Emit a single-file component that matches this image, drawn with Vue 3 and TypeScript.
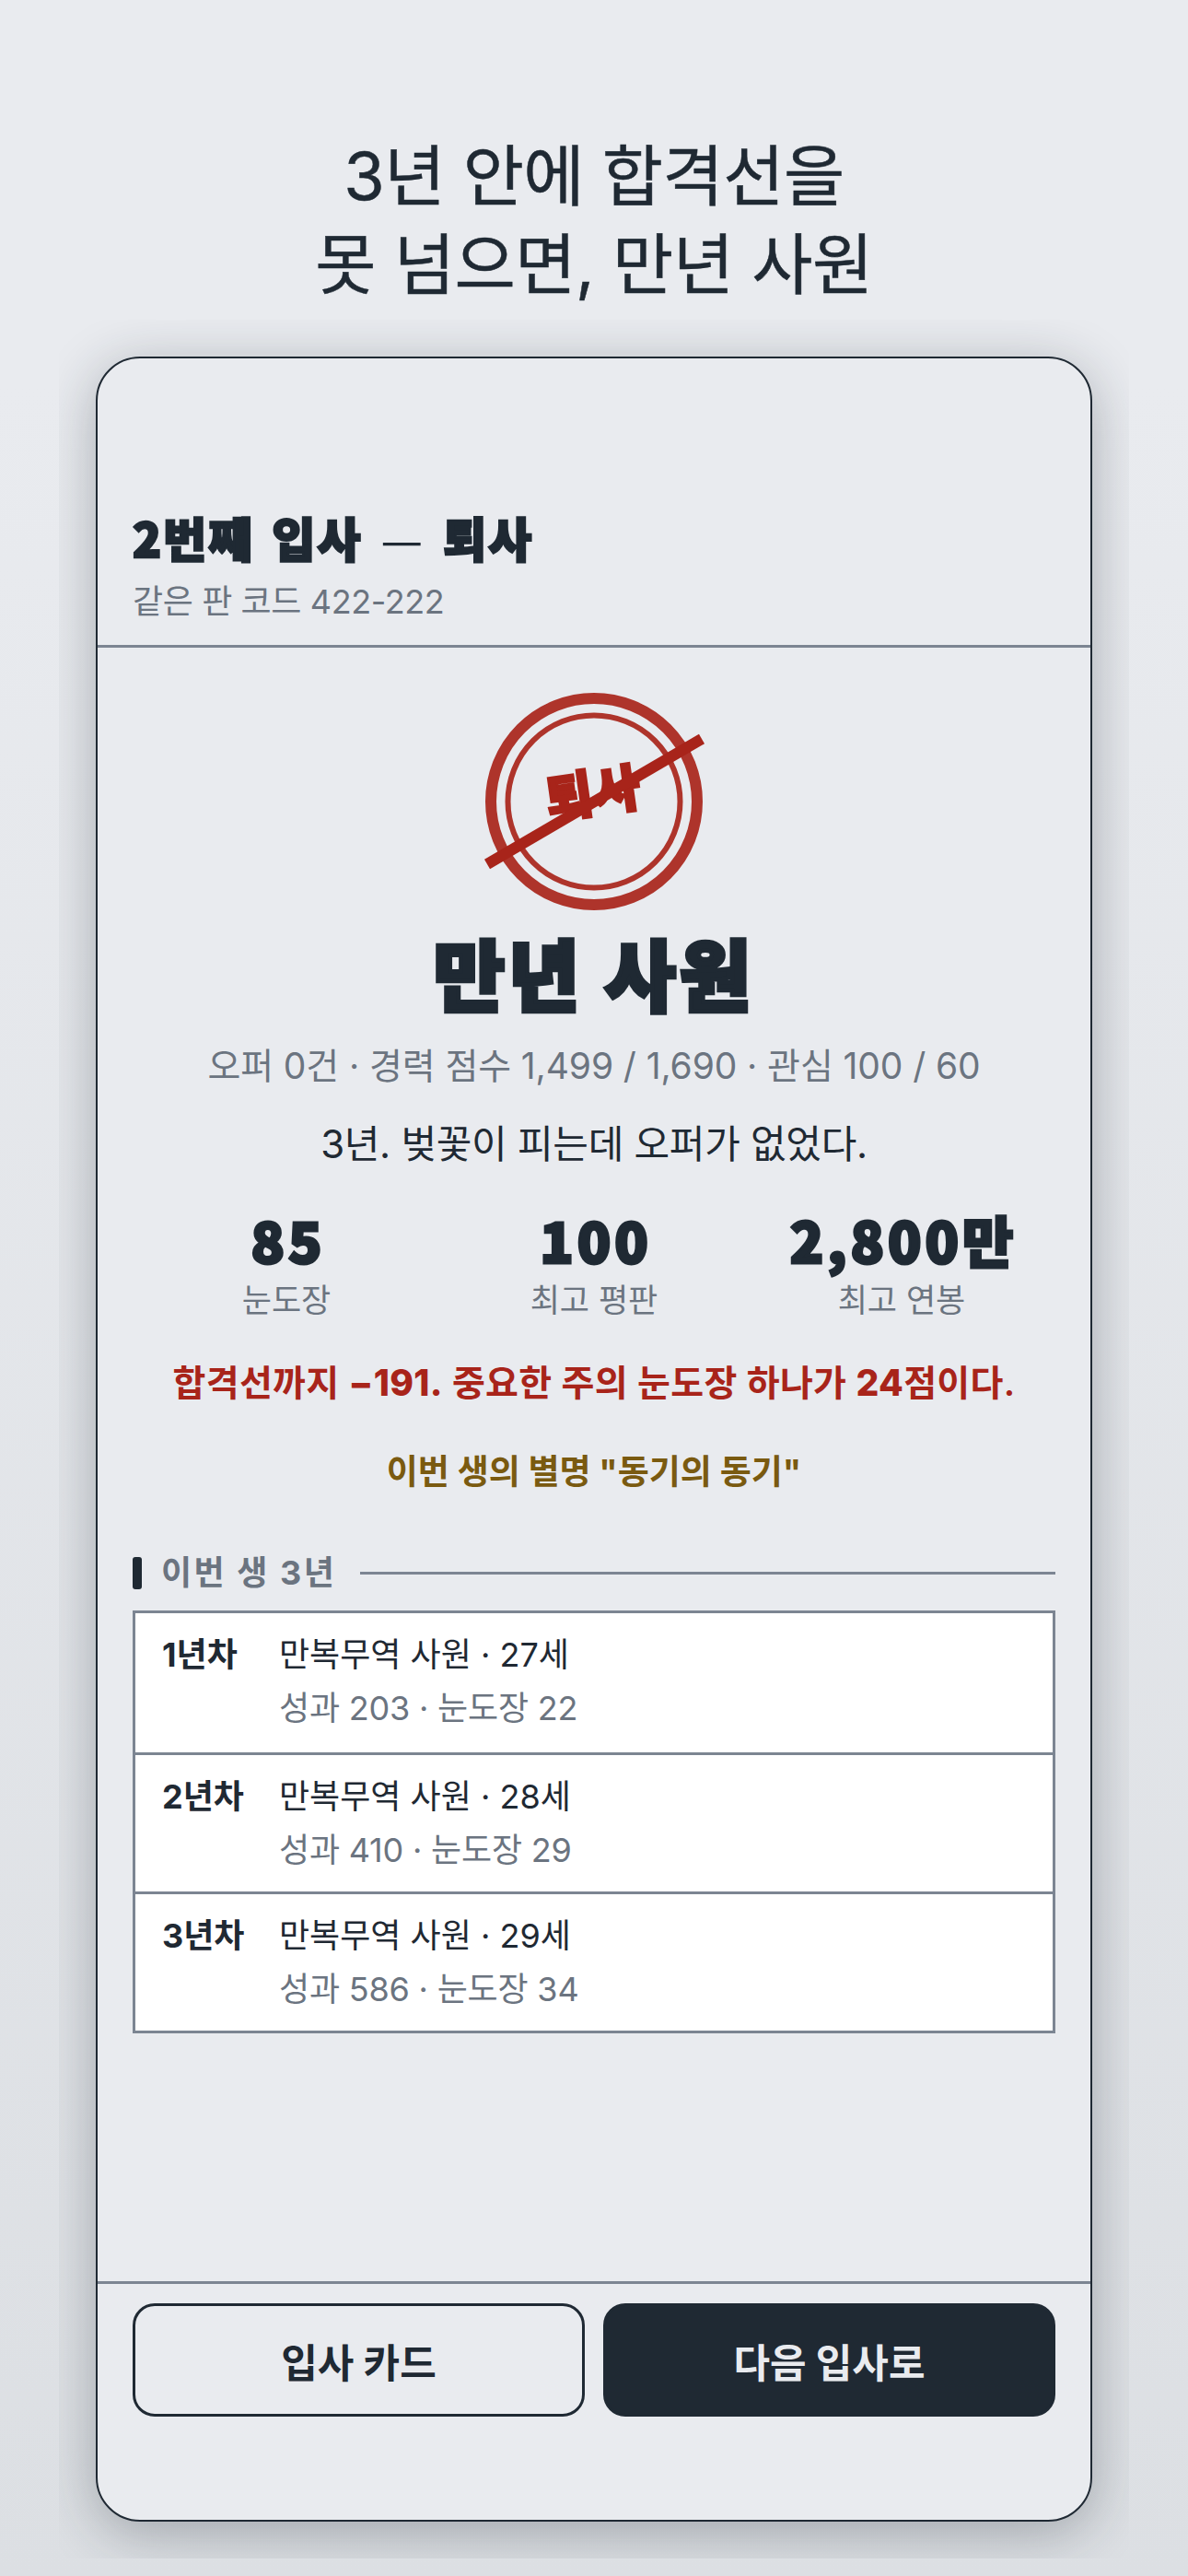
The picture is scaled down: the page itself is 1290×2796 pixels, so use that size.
<script setup lang="ts">
interface Stat {
  value: string;
  label: string;
}

interface YearRow {
  year: string;
  job: string;
  detail: string;
}

const stats: Stat[] = [
  { value: '85', label: '눈도장' },
  { value: '100', label: '최고 평판' },
  { value: '2,800만', label: '최고 연봉' },
];

const years: YearRow[] = [
  { year: '1년차', job: '만복무역 사원 · 27세', detail: '성과 203 · 눈도장 22' },
  { year: '2년차', job: '만복무역 사원 · 28세', detail: '성과 410 · 눈도장 29' },
  { year: '3년차', job: '만복무역 사원 · 29세', detail: '성과 586 · 눈도장 34' },
];
</script>

<template>
  <div class="page">
    <h1 class="headline">3년 안에 합격선을<br />못 넘으면, 만년 사원</h1>

    <div class="phone-clip">
      <div class="phone">
        <header class="top">
          <h2 class="top-title">2번째 입사 <span class="dash">—</span> 퇴사</h2>
          <p class="top-sub">같은 판 코드 422-222</p>
        </header>

        <main class="body">
          <div class="stamp">
            <svg width="250" height="250" viewBox="0 0 250 250">
              <circle cx="125" cy="125" r="112" class="ring" stroke-width="12" />
              <circle cx="125" cy="125" r="93.5" class="ring" stroke-width="6" />
              <text x="125" y="136" class="stamp-text" text-anchor="middle" transform="rotate(-8 125 125)">퇴사</text>
              <line x1="9" y1="193" x2="242" y2="57" class="slash" stroke-width="12" />
            </svg>
          </div>

          <div class="rank">만년 사원</div>
          <p class="summary">오퍼 0건 · 경력 점수 1,499 / 1,690 · 관심 100 / 60</p>
          <p class="quote">3년. 벚꽃이 피는데 오퍼가 없었다.</p>

          <div class="stats">
            <div v-for="stat in stats" :key="stat.label" class="stat">
              <div class="stat-value">{{ stat.value }}</div>
              <div class="stat-label">{{ stat.label }}</div>
            </div>
          </div>

          <p class="warn">합격선까지 <b>−191.</b> 중요한 주의 눈도장 하나가 <b>24</b>점이다.</p>
          <p class="nick">이번 생의 별명 "동기의 동기"</p>

          <div class="section-head">
            <span class="section-bar"></span>
            <span class="section-name">이번 생 3년</span>
            <span class="section-line"></span>
          </div>

          <ul class="years">
            <li v-for="row in years" :key="row.year" class="year-row">
              <span class="year">{{ row.year }}</span>
              <div>
                <div class="job">{{ row.job }}</div>
                <div class="detail">{{ row.detail }}</div>
              </div>
            </li>
          </ul>
        </main>

        <footer class="actions">
          <button class="btn ghost">입사 카드</button>
          <button class="btn solid">다음 입사로</button>
        </footer>
      </div>
    </div>
  </div>
</template>

<style>
html,
body {
  margin: 0;
  background: #e9ebef;
}
</style>

<style scoped>
.page {
  width: 1290px;
  height: 2796px;
  box-sizing: border-box;
  padding-top: 143px;
  overflow: hidden;
  background: linear-gradient(180deg, #e9ebef 0%, #e9ebef 15%, #dcdfe3 100%);
  font-family: Inter, "Noto Sans CJK KR", sans-serif;
  color: #1f2933;
}

.headline {
  margin: 0;
  text-align: center;
  font-size: 72px;
  line-height: 96px;
  font-weight: 400;
  letter-spacing: -0.5px;
  -webkit-text-stroke: 0.5px #1f2933;
}

/* the shadow stops dead 40px outside the card in the reference */
.phone-clip {
  width: 1162px;
  margin: 12px auto 0;
  padding: 40px;
  box-sizing: border-box;
  overflow: hidden;
}

.phone {
  height: 2350px;
  box-sizing: border-box;
  display: flex;
  flex-direction: column;
  background: #e9ebef;
  border: 2px solid #1f2933;
  border-radius: 48px;
  box-shadow: 0 12px 60px rgba(31, 41, 51, 0.32);
}

.top {
  height: 314px;
  box-sizing: border-box;
  padding: 161px 38px 0;
  border-bottom: 3px solid #7c8592;
}

.top-title {
  margin: 0;
  font-family: "Noto Sans CJK KR", sans-serif;
  font-size: 51px;
  line-height: 66px;
  font-weight: 900;
  -webkit-text-stroke: 2.5px #1f2933;
  letter-spacing: 2.2px;
  word-spacing: 6px;
}

.dash {
  font-weight: 400;
  -webkit-text-stroke: 0;
}

.top-sub {
  margin: 10px 0 0;
  font-size: 36px;
  line-height: 54px;
  letter-spacing: -0.4px;
  color: #6b7480;
}

.body {
  flex: 1;
  display: flex;
  flex-direction: column;
  align-items: center;
  padding: 42px 38px 0;
}

.stamp {
  height: 250px;
}

.ring {
  fill: none;
  stroke: #a8241a;
  opacity: 0.92;
}

.slash {
  stroke: #a8241a;
}

.stamp-text {
  font-family: "Noto Sans CJK KR", sans-serif;
  font-size: 56px;
  font-weight: 900;
  fill: #a8241a;
  stroke: #a8241a;
  stroke-width: 2.5px;
}

.rank {
  margin-top: 8px;
  font-family: "Noto Sans CJK KR", sans-serif;
  font-size: 84px;
  line-height: 104px;
  font-weight: 900;
  -webkit-text-stroke: 4.5px #1f2933;
  letter-spacing: 4px;
}

.summary {
  margin: 23px 0 0;
  font-size: 39px;
  line-height: 54px;
  letter-spacing: -0.1px;
  color: #6b7480;
}

.quote {
  margin: 30px 0 0;
  font-size: 42px;
  line-height: 56px;
  letter-spacing: -0.3px;
}

.stats {
  width: 100%;
  margin-top: 39px;
  display: grid;
  grid-template-columns: repeat(3, 1fr);
  text-align: center;
}

.stat-value {
  font-family: "Noto Sans CJK KR", sans-serif;
  font-size: 60px;
  line-height: 72px;
  font-weight: 900;
  -webkit-text-stroke: 3px #1f2933;
  letter-spacing: 4px;
  text-indent: 4px;
}

.stat-label {
  margin-top: 6px;
  font-size: 35px;
  line-height: 48px;
  color: #6b7480;
}

.warn {
  margin: 38px 0 0;
  font-size: 39px;
  line-height: 56px;
  font-weight: 600;
  letter-spacing: 0.3px;
  color: #a8241a;
}

.warn b {
  font-weight: 800;
}

.nick {
  margin: 42px 0 0;
  font-size: 37px;
  line-height: 54px;
  font-weight: 700;
  color: #7a5a10;
}

.section-head {
  width: 100%;
  margin-top: 58px;
  display: flex;
  align-items: center;
}

.section-bar {
  width: 10px;
  height: 35px;
  border-radius: 3px;
  background: #1f2933;
}

.section-name {
  margin-left: 21px;
  font-size: 36px;
  line-height: 48px;
  font-weight: 700;
  letter-spacing: 2.5px;
  color: #6b7480;
}

.section-line {
  flex: 1;
  margin-left: 26px;
  height: 3px;
  background: #7c8592;
}

.years {
  width: 100%;
  box-sizing: border-box;
  margin: 17px 0 0;
  padding: 0;
  list-style: none;
  background: #fff;
  border: 3px solid #7c8592;
}

.year-row {
  height: 151px;
  box-sizing: border-box;
  padding: 18px 29px 0;
  display: flex;
  font-size: 36px;
}

.year-row + .year-row {
  border-top: 3px solid #7c8592;
}

.year {
  width: 127px;
  line-height: 54px;
  font-weight: 700;
}

.job {
  line-height: 54px;
}

.detail {
  margin-top: 4px;
  line-height: 54px;
  letter-spacing: -0.2px;
  color: #6b7480;
}

.actions {
  height: 259px;
  box-sizing: border-box;
  padding: 21px 38px 0;
  display: grid;
  grid-template-columns: 1fr 1fr;
  gap: 20px;
  align-items: start;
  border-top: 3px solid #7c8592;
}

.btn {
  height: 123px;
  border-radius: 24px;
  font-family: Inter, "Noto Sans CJK KR", sans-serif;
  font-size: 43px;
  font-weight: 700;
  border: 3px solid #1f2933;
}

.ghost {
  background: transparent;
  color: #1f2933;
}

.solid {
  background: #1f2933;
  color: #e9ebef;
}
</style>
